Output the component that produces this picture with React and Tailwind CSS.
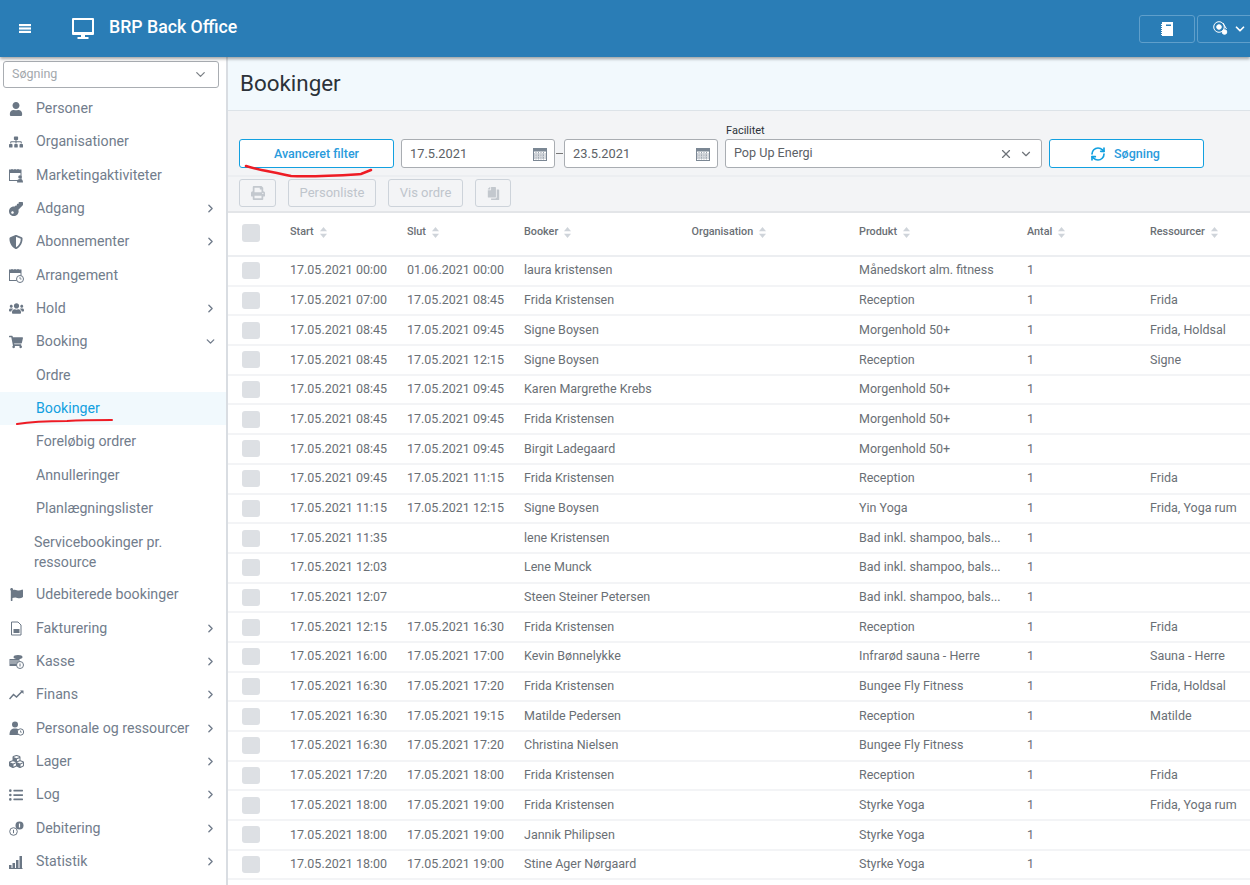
import React from "react";
import { ChevronDown, ChevronRight, X, RefreshCw } from "lucide-react";
import {
  FaUser,
  FaSitemap,
  FaKey,
  FaShieldAlt,
  FaUsers,
  FaShoppingCart,
  FaFlag,
  FaCubes,
  FaListUl,
  FaPrint,
  FaCopy,
} from "react-icons/fa";

// small custom glyphs for the icons the packages don't have
const CalendarBadge = ({ clock }) => (
  <svg width="15" height="15" viewBox="0 0 15 15" fill="none" className="text-[#6b7785]">
    <rect x="0.5" y="2" width="11.5" height="10.5" stroke="currentColor" />
    <rect x="0.5" y="2" width="11.5" height="3" fill="currentColor" />
    <path d="M3 1v2M6 1v2M9 1v2" stroke="currentColor" strokeWidth="1.2" />
    {clock ? (
      <>
        <circle cx="11" cy="11" r="3.5" fill="#fff" stroke="currentColor" />
        <path d="M11 9v2h1.6" stroke="currentColor" strokeWidth="0.8" />
      </>
    ) : (
      <>
        <circle cx="11" cy="9" r="1.8" fill="currentColor" />
        <path d="M8 14.5c0-2.5 1-3.5 3-3.5s3 1 3 3.5z" fill="currentColor" />
      </>
    )}
  </svg>
);

const InvoiceIcon = () => (
  <svg width="15" height="15" viewBox="0 0 15 15" fill="none" className="text-[#6b7785]">
    <path d="M2.5 1h6.500l3 3v10h-9.500z" stroke="currentColor" />
    <path d="M4.500 8h6v4h-6z" fill="currentColor" />
  </svg>
);

const CashIcon = () => (
  <svg width="15" height="15" viewBox="0 0 15 15" fill="none" className="text-[#6b7785]">
    <rect x="0.5" y="5" width="10" height="7" fill="currentColor" />
    <path d="M1 7h9M1 9h9" stroke="#fff" strokeWidth="0.7" />
    <ellipse cx="9" cy="3" rx="4.500" ry="2" fill="currentColor" />
    <circle cx="11" cy="11" r="3.500" fill="#fff" stroke="currentColor" />
    <path d="M11 9.500v3" stroke="currentColor" />
  </svg>
);

const TrendIcon = () => (
  <svg width="15" height="15" viewBox="0 0 15 15" fill="none" className="text-[#6b7785]">
    <path d="M0.500 12l4-4.500 3 2.500 6-6" stroke="currentColor" strokeWidth="1.500" />
    <path d="M11 3.500h3.500v3.500z" fill="currentColor" />
  </svg>
);

const StaffIcon = () => (
  <svg width="15" height="15" viewBox="0 0 15 15" fill="none" className="text-[#6b7785]">
    <circle cx="6" cy="3.500" r="3" fill="currentColor" />
    <path d="M0.500 14c0-5 2-6.500 5.500-6.500S11.500 9 11.500 14z" fill="currentColor" />
    <circle cx="11.500" cy="11" r="3.200" fill="#fff" stroke="currentColor" />
    <path d="M11.500 9.500v1.700h1.300" stroke="currentColor" strokeWidth="0.8" />
  </svg>
);

const DebitIcon = () => (
  <svg width="15" height="15" viewBox="0 0 15 15" fill="none" className="text-[#6b7785]">
    <circle cx="4.500" cy="10.500" r="3.800" fill="#fff" stroke="currentColor" />
    <circle cx="10.500" cy="4.500" r="4" fill="currentColor" />
    <path d="M10.500 2.500v4" stroke="#fff" strokeWidth="1.200" />
    <path d="M4.500 8.800v3.400" stroke="currentColor" />
  </svg>
);

const BarsIcon = () => (
  <svg width="14" height="14" viewBox="0 0 14 14" className="text-[#6b7785]" fill="currentColor">
    <rect x="0" y="10" width="2.500" height="3" />
    <rect x="3.500" y="8" width="2.500" height="5" />
    <rect x="7" y="5" width="2.500" height="8" />
    <rect x="10.500" y="1" width="2.500" height="12" />
    <rect x="0" y="13" width="13.500" height="1" />
  </svg>
);

const CalIcon = () => (
  <svg width="14" height="14" viewBox="0 0 14 14" fill="none" className="text-[#7b8794]">
    <rect x="0.500" y="1.500" width="13" height="12" stroke="currentColor" />
    <rect x="0.500" y="1.500" width="13" height="3" fill="currentColor" />
    <path
      d="M3 5v8M5.500 5v8M8 5v8M10.500 5v8M1 7h12M1 9h12M1 11h12"
      stroke="currentColor"
      strokeWidth="0.8"
      strokeDasharray="1 0.600"
    />
  </svg>
);

const Burger = () => (
  <svg width="12" height="9" viewBox="0 0 12 9" fill="#fff">
    <rect width="12" height="2.200" />
    <rect y="3.400" width="12" height="2.200" />
    <rect y="6.800" width="12" height="2.200" />
  </svg>
);

const Screen = () => (
  <svg width="22" height="21" viewBox="0 0 22 21" fill="#fff">
    <path fillRule="evenodd" d="M1 0h20a1 1 0 0 1 1 1v15a1 1 0 0 1-1 1H1a1 1 0 0 1-1-1V1a1 1 0 0 1 1-1zm1 2v12h18V2z" />
    <rect x="9" y="17" width="4" height="2.500" />
    <rect x="5.500" y="19" width="11" height="2" />
  </svg>
);

const Notebook = () => (
  <svg width="12" height="14" viewBox="0 0 12 14" fill="#fff">
    <path d="M1 0h11v14H1v-1H0v-1h1v-1H0v-1h1V9H0V8h1V7H0V6h1V5H0V4h1V3H0V2h1z" />
    <rect x="5" y="2.500" width="5" height="1.500" fill="#2a7db6" />
  </svg>
);

const GearCog = () => (
  <svg width="15" height="15" viewBox="0 0 15 15" fill="none" stroke="#fff">
    <circle cx="6" cy="6" r="5.300" />
    <circle cx="6" cy="6" r="2.300" fill="#fff" />
    <circle cx="11.500" cy="11" r="2.300" fill="#fff" />
    <path d="M10 2l3.500 6" />
  </svg>
);

const SortArrows = () => (
  <svg width="7" height="11" viewBox="0 0 7 11" fill="#cfd4da" className="ml-[6px] shrink-0">
    <path d="M3.500 0L7 4.300H0z" />
    <path d="M3.500 11L0 6.700h7z" />
  </svg>
);

const gray = "text-[#6b7785]";

const menu = [
  { label: "Personer", icon: <FaUser size={14} className={gray} /> },
  { label: "Organisationer", icon: <FaSitemap size={14} className={gray} /> },
  { label: "Marketingaktiviteter", icon: <CalendarBadge /> },
  { label: "Adgang", icon: <FaKey size={14} className={`${gray} rotate-180`} />, arrow: "right" },
  { label: "Abonnementer", icon: <FaShieldAlt size={14} className={gray} />, arrow: "right" },
  { label: "Arrangement", icon: <CalendarBadge clock /> },
  { label: "Hold", icon: <FaUsers size={15} className={gray} />, arrow: "right" },
  { label: "Booking", icon: <FaShoppingCart size={14} className={gray} />, arrow: "down" },
  { label: "Ordre", sub: true },
  { label: "Bookinger", sub: true, active: true },
  { label: "Foreløbig ordrer", sub: true },
  { label: "Annulleringer", sub: true },
  { label: "Planlægningslister", sub: true },
  { label: "Servicebookinger pr. ressource", sub: true, wrap: true },
  { label: "Udebiterede bookinger", icon: <FaFlag size={13} className={gray} /> },
  { label: "Fakturering", icon: <InvoiceIcon />, arrow: "right" },
  { label: "Kasse", icon: <CashIcon />, arrow: "right" },
  { label: "Finans", icon: <TrendIcon />, arrow: "right" },
  { label: "Personale og ressourcer", icon: <StaffIcon />, arrow: "right" },
  { label: "Lager", icon: <FaCubes size={15} className={gray} />, arrow: "right" },
  { label: "Log", icon: <FaListUl size={14} className={gray} />, arrow: "right" },
  { label: "Debitering", icon: <DebitIcon />, arrow: "right" },
  { label: "Statistik", icon: <BarsIcon />, arrow: "right" },
];

const rows = [
  ["17.05.2021 00:00", "01.06.2021 00:00", "laura kristensen", "Månedskort alm. fitness", ""],
  ["17.05.2021 07:00", "17.05.2021 08:45", "Frida Kristensen", "Reception", "Frida"],
  ["17.05.2021 08:45", "17.05.2021 09:45", "Signe Boysen", "Morgenhold 50+", "Frida, Holdsal"],
  ["17.05.2021 08:45", "17.05.2021 12:15", "Signe Boysen", "Reception", "Signe"],
  ["17.05.2021 08:45", "17.05.2021 09:45", "Karen Margrethe Krebs", "Morgenhold 50+", ""],
  ["17.05.2021 08:45", "17.05.2021 09:45", "Frida Kristensen", "Morgenhold 50+", ""],
  ["17.05.2021 08:45", "17.05.2021 09:45", "Birgit Ladegaard", "Morgenhold 50+", ""],
  ["17.05.2021 09:45", "17.05.2021 11:15", "Frida Kristensen", "Reception", "Frida"],
  ["17.05.2021 11:15", "17.05.2021 12:15", "Signe Boysen", "Yin Yoga", "Frida, Yoga rum"],
  ["17.05.2021 11:35", "", "lene Kristensen", "Bad inkl. shampoo, bals...", ""],
  ["17.05.2021 12:03", "", "Lene Munck", "Bad inkl. shampoo, bals...", ""],
  ["17.05.2021 12:07", "", "Steen Steiner Petersen", "Bad inkl. shampoo, bals...", ""],
  ["17.05.2021 12:15", "17.05.2021 16:30", "Frida Kristensen", "Reception", "Frida"],
  ["17.05.2021 16:00", "17.05.2021 17:00", "Kevin Bønnelykke", "Infrarød sauna - Herre", "Sauna - Herre"],
  ["17.05.2021 16:30", "17.05.2021 17:20", "Frida Kristensen", "Bungee Fly Fitness", "Frida, Holdsal"],
  ["17.05.2021 16:30", "17.05.2021 19:15", "Matilde Pedersen", "Reception", "Matilde"],
  ["17.05.2021 16:30", "17.05.2021 17:20", "Christina Nielsen", "Bungee Fly Fitness", ""],
  ["17.05.2021 17:20", "17.05.2021 18:00", "Frida Kristensen", "Reception", "Frida"],
  ["17.05.2021 18:00", "17.05.2021 19:00", "Frida Kristensen", "Styrke Yoga", "Frida, Yoga rum"],
  ["17.05.2021 18:00", "17.05.2021 19:00", "Jannik Philipsen", "Styrke Yoga", ""],
  ["17.05.2021 18:00", "17.05.2021 19:00", "Stine Ager Nørgaard", "Styrke Yoga", ""],
];

const gridCols = "grid grid-cols-[62px_117px_117px_167.5px_167.5px_168px_123px_1fr]";
const headers = ["Start", "Slut", "Booker", "Organisation", "Produkt", "Antal", "Ressourcer"];

const MenuItem = ({ item }) => (
  <div
    className={`relative flex items-center text-[14.200px] ${
      item.wrap ? "h-[53px] pl-[34px] leading-[20px]" : item.sub ? "h-[33.330px] pl-[36px]" : "h-[33.330px]"
    } ${item.active ? "bg-[#f1f9fd] text-[#12a0e0]" : "text-[#727d8c]"}`}
  >
    {item.icon && <span className="w-[36px] flex justify-center pl-[1px] pr-[5px]">{item.icon}</span>}
    <span className={item.wrap ? "w-[150px]" : ""}>{item.label}</span>
    {item.arrow === "right" && (
      <ChevronRight size={13} strokeWidth={2.5} className="ml-auto mr-[9px] text-[#727d8c]" />
    )}
    {item.arrow === "down" && (
      <ChevronDown size={13} strokeWidth={2.5} className="ml-auto mr-[9px] text-[#727d8c]" />
    )}
  </div>
);

const DateField = ({ value }) => (
  <div className="w-[154px] h-[29px] bg-white border border-[#a9adb2] rounded-[3px] flex items-center justify-between pl-[8px] pr-[7px] text-[12.800px] text-[#5c6166]">
    <span>{value}</span>
    <CalIcon />
  </div>
);

const DisabledBtn = ({ children, className }) => (
  <div
    className={`h-[28px] border border-[#cdd3da] rounded-[3px] flex items-center justify-center text-[13px] text-[#bfc5cc] ${className}`}
  >
    {children}
  </div>
);

const App = () => {
  return (
    <div className="relative w-[1250px] h-[885px] overflow-hidden bg-white flex flex-col font-['Roboto',sans-serif]">
      {/* top bar */}
      <header className="h-[57px] shrink-0 bg-[#2a7db6] flex items-center text-white shadow-[0_2px_3px_rgba(0,0,0,0.35)] z-10">
        <span className="ml-[19px]">
          <Burger />
        </span>
        <span className="ml-[41px] mb-[1px]">
          <Screen />
        </span>
        <span className="ml-[15px] mb-[3px] text-[17.700px] font-medium">BRP Back Office</span>
        <div className="ml-auto flex gap-[2px] -mr-[2px]">
          <div className="w-[56px] h-[28px] border border-[#5f9fcb] rounded-[3px] flex items-center justify-center">
            <Notebook />
          </div>
          <div className="w-[55px] h-[28px] border border-[#5f9fcb] rounded-l-[3px] flex items-center pl-[15px] gap-[5px]">
            <GearCog />
            <ChevronDown size={14} strokeWidth={3} />
          </div>
        </div>
      </header>

      <div className="flex flex-1 min-h-0">
        {/* sidebar */}
        <aside className="w-[228px] shrink-0 border-r-2 border-[#d9dde2] bg-white pt-[4px]">
          <div className="mx-[3px] w-[216px] h-[27px] border border-[#a9adb2] rounded-[3px] flex items-center justify-between pl-[8px] pr-[10px] text-[12.500px] text-[#a3a8ad]">
            <span>Søgning</span>
            <ChevronDown size={15} className="text-[#7b8085]" />
          </div>
          <nav className="mt-[4px]">
            {menu.map((item) => (
              <MenuItem key={item.label} item={item} />
            ))}
          </nav>
        </aside>

        {/* content */}
        <main className="flex-1 min-w-0 bg-[#f3f4f6] flex flex-col">
          <div className="h-[54px] shrink-0 bg-[#f2f9fd] border-b border-[#dde3e8] flex items-center pl-[12px]">
            <h1 className="text-[22.400px] text-[#2c3239]">Bookinger</h1>
          </div>

          <div className="h-[66px] shrink-0 pl-[11px] flex items-end gap-[7px] border-b-2 border-[#eceef1] pb-[7px]">
            <button className="w-[155px] h-[29px] pt-[1px] bg-white border border-[#12a0e0] rounded-[3px] text-[12.500px] font-medium text-[#2a9bdc]">
              Avanceret filter
            </button>
            <div className="flex items-center gap-[1px]">
              <DateField value="17.5.2021" />
              <span className="w-[7px] h-px bg-[#777]"></span>
              <DateField value="23.5.2021" />
            </div>
            <div className="relative">
              <label className="absolute left-px -top-[16px] text-[11px] text-[#2c3239]">Facilitet</label>
              <div className="w-[317px] h-[29px] bg-white border border-[#a9adb2] rounded-[3px] flex items-center pl-[8px] pr-[8px] text-[12.600px] text-[#5c6166]">
                <span>Pop Up Energi</span>
                <X size={14} className="ml-auto text-[#6e7379]" />
                <ChevronDown size={14} className="ml-[6px] text-[#6e7379]" />
              </div>
            </div>
            <button className="w-[155px] h-[29px] pt-[1px] pr-[3px] bg-white border border-[#12a0e0] rounded-[3px] flex items-center justify-center gap-[8px] text-[12.500px] font-medium text-[#2a9bdc]">
              <RefreshCw size={16} strokeWidth={2.5} className="text-[#12a0e0]" />
              Søgning
            </button>
          </div>

          <div className="h-[36px] shrink-0 pl-[11px] pt-[2px] flex gap-[12px] border-b-2 border-[#e3e5e8]">
            <DisabledBtn className="w-[37px]">
              <FaPrint size={14} className="text-[#c3c8ce]" />
            </DisabledBtn>
            <DisabledBtn className="w-[88px]">Personliste</DisabledBtn>
            <DisabledBtn className="w-[75px]">Vis ordre</DisabledBtn>
            <DisabledBtn className="w-[36px]">
              <FaCopy size={13} className="text-[#c3c8ce] -scale-x-100" />
            </DisabledBtn>
          </div>

          {/* table */}
          <div className="flex-1 bg-white text-[12.500px] text-[#6a6f75]">
            <div className={`${gridCols} h-[44px] border-b-2 border-[#eceef1] items-center`}>
              <span className="ml-[14px] mb-[2px] w-[18px] h-[18px] rounded-[3px] bg-[#dde0e4]"></span>
              {headers.map((h) => (
                <div key={h} className="flex items-center mb-[3px] text-[10.800px] font-medium text-[#6a6f75]">
                  {h}
                  <SortArrows />
                </div>
              ))}
            </div>
            {rows.map((r, i) => (
              <div key={i} className={`${gridCols} h-[29.700px] border-b-2 border-[#f3f4f6] items-center`}>
                <span className="ml-[14px] w-[18px] h-[17px] rounded-[3px] bg-[#dde0e4]"></span>
                <span>{r[0]}</span>
                <span>{r[1]}</span>
                <span>{r[2]}</span>
                <span></span>
                <span>{r[3]}</span>
                <span>1</span>
                <span className="whitespace-nowrap">{r[4]}</span>
              </div>
            ))}
          </div>
        </main>
      </div>

      {/* red pen marks on the screenshot */}
      <svg className="absolute left-0 top-0 pointer-events-none" width="1250" height="885" fill="none">
        <path
          d="M246 166C258 170 275 172 291 176C315 177 345 175 361 174L371 170"
          stroke="#ee1c25"
          strokeWidth="2.500"
          strokeLinecap="round"
        />
        <path d="M17 424c18-3 30-3 50-3 16-1 30-1 45-1" stroke="#ee1c25" strokeWidth="2" strokeLinecap="round" />
      </svg>
    </div>
  );
};

export default App;
